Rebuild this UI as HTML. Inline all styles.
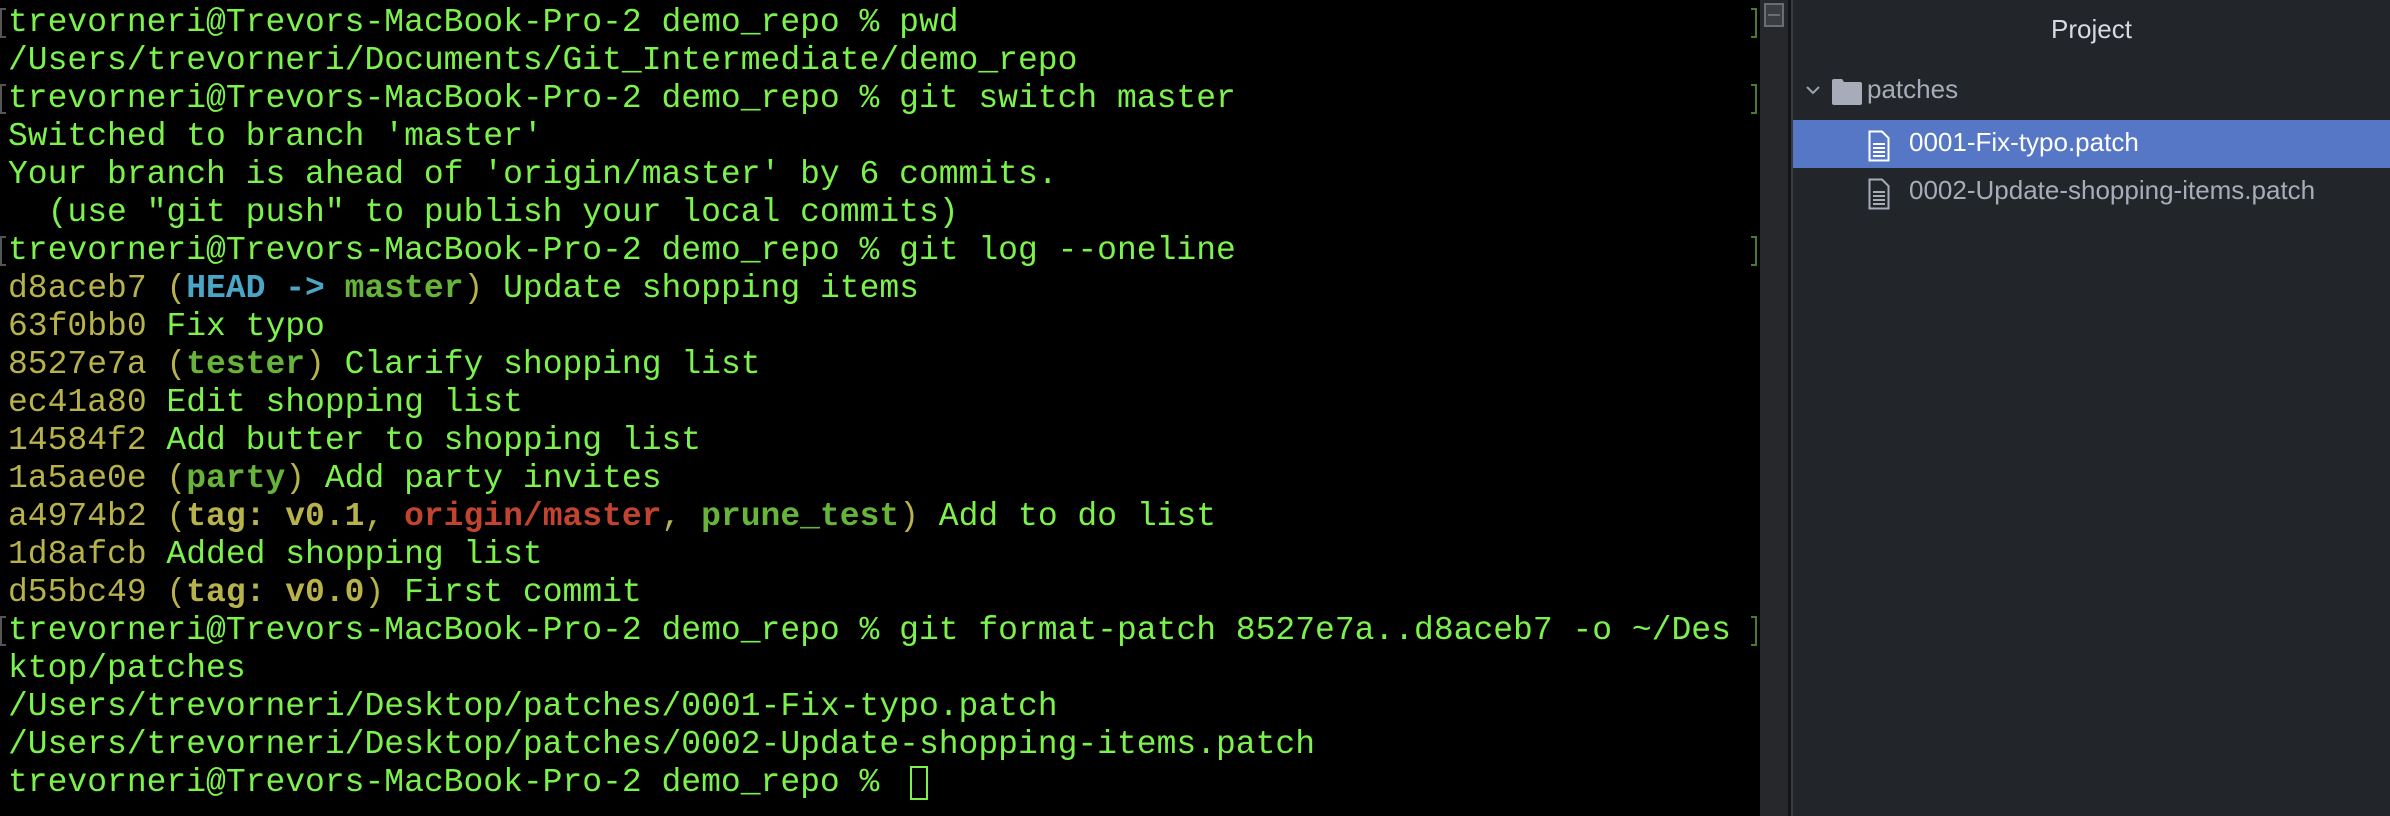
<!DOCTYPE html>
<html><head><meta charset="utf-8"><style>
*{margin:0;padding:0;box-sizing:border-box}
body{width:2390px;height:816px;background:#000;overflow:hidden;position:relative;font-family:"Liberation Mono",monospace}
#term{position:absolute;left:0;top:0;width:1760px;height:816px;background:#000}
.l{position:absolute;left:8px;height:38px;line-height:38px;font-size:33px;color:#7cf24c;white-space:pre}
.h{color:#b8b24a}.y{color:#b8b24a}.c{color:#4aa6c6;font-weight:bold}.g{color:#66b43a;font-weight:bold}.r{color:#c2432f;font-weight:bold}.yb{color:#b8b24a;font-weight:bold}
.lb{position:absolute;left:0;width:6px;height:30px;border:2px solid #555;border-right:none}
.rb{position:absolute;left:1751px;width:6px;height:30px;border:2px solid #4a7a30;border-left:none}
#strip{position:absolute;left:1760px;top:0;width:28px;height:816px;background:#26282c}
#sep{position:absolute;left:1788px;top:0;width:3px;height:816px;background:#141518}
#sep2{position:absolute;left:1791px;top:0;width:2px;height:816px;background:#3a3d42}
#panel{position:absolute;left:1793px;top:0;width:597px;height:816px;background:#22252a;font-family:"Liberation Sans",sans-serif}
.t{position:absolute;font-size:26px}
</style></head><body>
<div id="term">
<div class="l" style="top:4px">trevorneri@Trevors-MacBook-Pro-2 demo_repo % pwd</div>
<div class="l" style="top:42px">/Users/trevorneri/Documents/Git_Intermediate/demo_repo</div>
<div class="l" style="top:80px">trevorneri@Trevors-MacBook-Pro-2 demo_repo % git switch master</div>
<div class="l" style="top:118px">Switched to branch 'master'</div>
<div class="l" style="top:156px">Your branch is ahead of 'origin/master' by 6 commits.</div>
<div class="l" style="top:194px">  (use "git push" to publish your local commits)</div>
<div class="l" style="top:232px">trevorneri@Trevors-MacBook-Pro-2 demo_repo % git log --oneline</div>
<div class="l" style="top:270px"><span class="h">d8aceb7 (</span><span class="c">HEAD -&gt; </span><span class="g">master</span><span class="y">)</span> Update shopping items</div>
<div class="l" style="top:308px"><span class="h">63f0bb0</span> Fix typo</div>
<div class="l" style="top:346px"><span class="h">8527e7a (</span><span class="g">tester</span><span class="y">)</span> Clarify shopping list</div>
<div class="l" style="top:384px"><span class="h">ec41a80</span> Edit shopping list</div>
<div class="l" style="top:422px"><span class="h">14584f2</span> Add butter to shopping list</div>
<div class="l" style="top:460px"><span class="h">1a5ae0e (</span><span class="g">party</span><span class="y">)</span> Add party invites</div>
<div class="l" style="top:498px"><span class="h">a4974b2 (</span><span class="yb">tag: v0.1</span><span class="y">, </span><span class="r">origin/master</span><span class="y">, </span><span class="g">prune_test</span><span class="y">)</span> Add to do list</div>
<div class="l" style="top:536px"><span class="h">1d8afcb</span> Added shopping list</div>
<div class="l" style="top:574px"><span class="h">d55bc49 (</span><span class="yb">tag: v0.0</span><span class="y">)</span> First commit</div>
<div class="l" style="top:612px">trevorneri@Trevors-MacBook-Pro-2 demo_repo % git format-patch 8527e7a..d8aceb7 -o ~/Des</div>
<div class="l" style="top:650px">ktop/patches</div>
<div class="l" style="top:688px">/Users/trevorneri/Desktop/patches/0001-Fix-typo.patch</div>
<div class="l" style="top:726px">/Users/trevorneri/Desktop/patches/0002-Update-shopping-items.patch</div>
<div class="l" style="top:764px">trevorneri@Trevors-MacBook-Pro-2 demo_repo % </div>
<div style="position:absolute;left:910px;top:766px;width:18px;height:34px;border:2px solid #7cf24c"></div>
<div class="lb" style="top:8px"></div><div class="lb" style="top:84px"></div><div class="lb" style="top:236px"></div><div class="lb" style="top:616px"></div>
<div class="rb" style="top:8px"></div><div class="rb" style="top:84px"></div><div class="rb" style="top:236px"></div><div class="rb" style="top:616px"></div>
</div>
<div id="strip"><div style="position:absolute;left:4px;top:3px;width:20px;height:24px;border:2px solid #6a6d72;background:#3a3d42"><div style="position:absolute;left:2px;top:9px;width:12px;height:2px;background:#6a6d72"></div></div></div>
<div id="sep"></div><div id="sep2"></div>
<div id="panel">
<div class="t" style="left:0;width:597px;text-align:center;top:14px;color:#d7dae0">Project</div>
<svg style="position:absolute;left:12px;top:84px" width="16" height="12" viewBox="0 0 16 12"><path d="M2 3 L8 9 L14 3" fill="none" stroke="#9da3ad" stroke-width="2"/></svg>
<svg style="position:absolute;left:39px;top:78px" width="30" height="27" viewBox="0 0 30 27"><path d="M0 3 Q0 1 2 1 H10 L12 4 H28 Q30 4 30 6 V25 Q30 27 28 27 H2 Q0 27 0 25 Z" fill="#a7adb8"/></svg>
<div class="t" style="left:74px;top:74px;color:#a7adb8">patches</div>
<div style="position:absolute;left:0;top:120px;width:597px;height:48px;background:#5677c6"></div>
<svg style="position:absolute;left:75px;top:130px" width="22" height="32" viewBox="0 0 22 32"><path d="M1.5 1.5 H14 L20.5 8 V30.5 H1.5 Z" fill="none" stroke="#fff" stroke-width="2"/><path d="M5 14H17M5 18H17M5 22H17M5 26H17" stroke="#fff" stroke-width="2"/></svg>
<div class="t" style="left:116px;top:127px;color:#fff">0001-Fix-typo.patch</div>
<svg style="position:absolute;left:75px;top:178px" width="22" height="32" viewBox="0 0 22 32"><path d="M1.5 1.5 H14 L20.5 8 V30.5 H1.5 Z" fill="none" stroke="#a7adb8" stroke-width="2"/><path d="M5 14H17M5 18H17M5 22H17M5 26H17" stroke="#a7adb8" stroke-width="2"/></svg>
<div class="t" style="left:116px;top:175px;color:#a7adb8">0002-Update-shopping-items.patch</div>
</div>
</body></html>
